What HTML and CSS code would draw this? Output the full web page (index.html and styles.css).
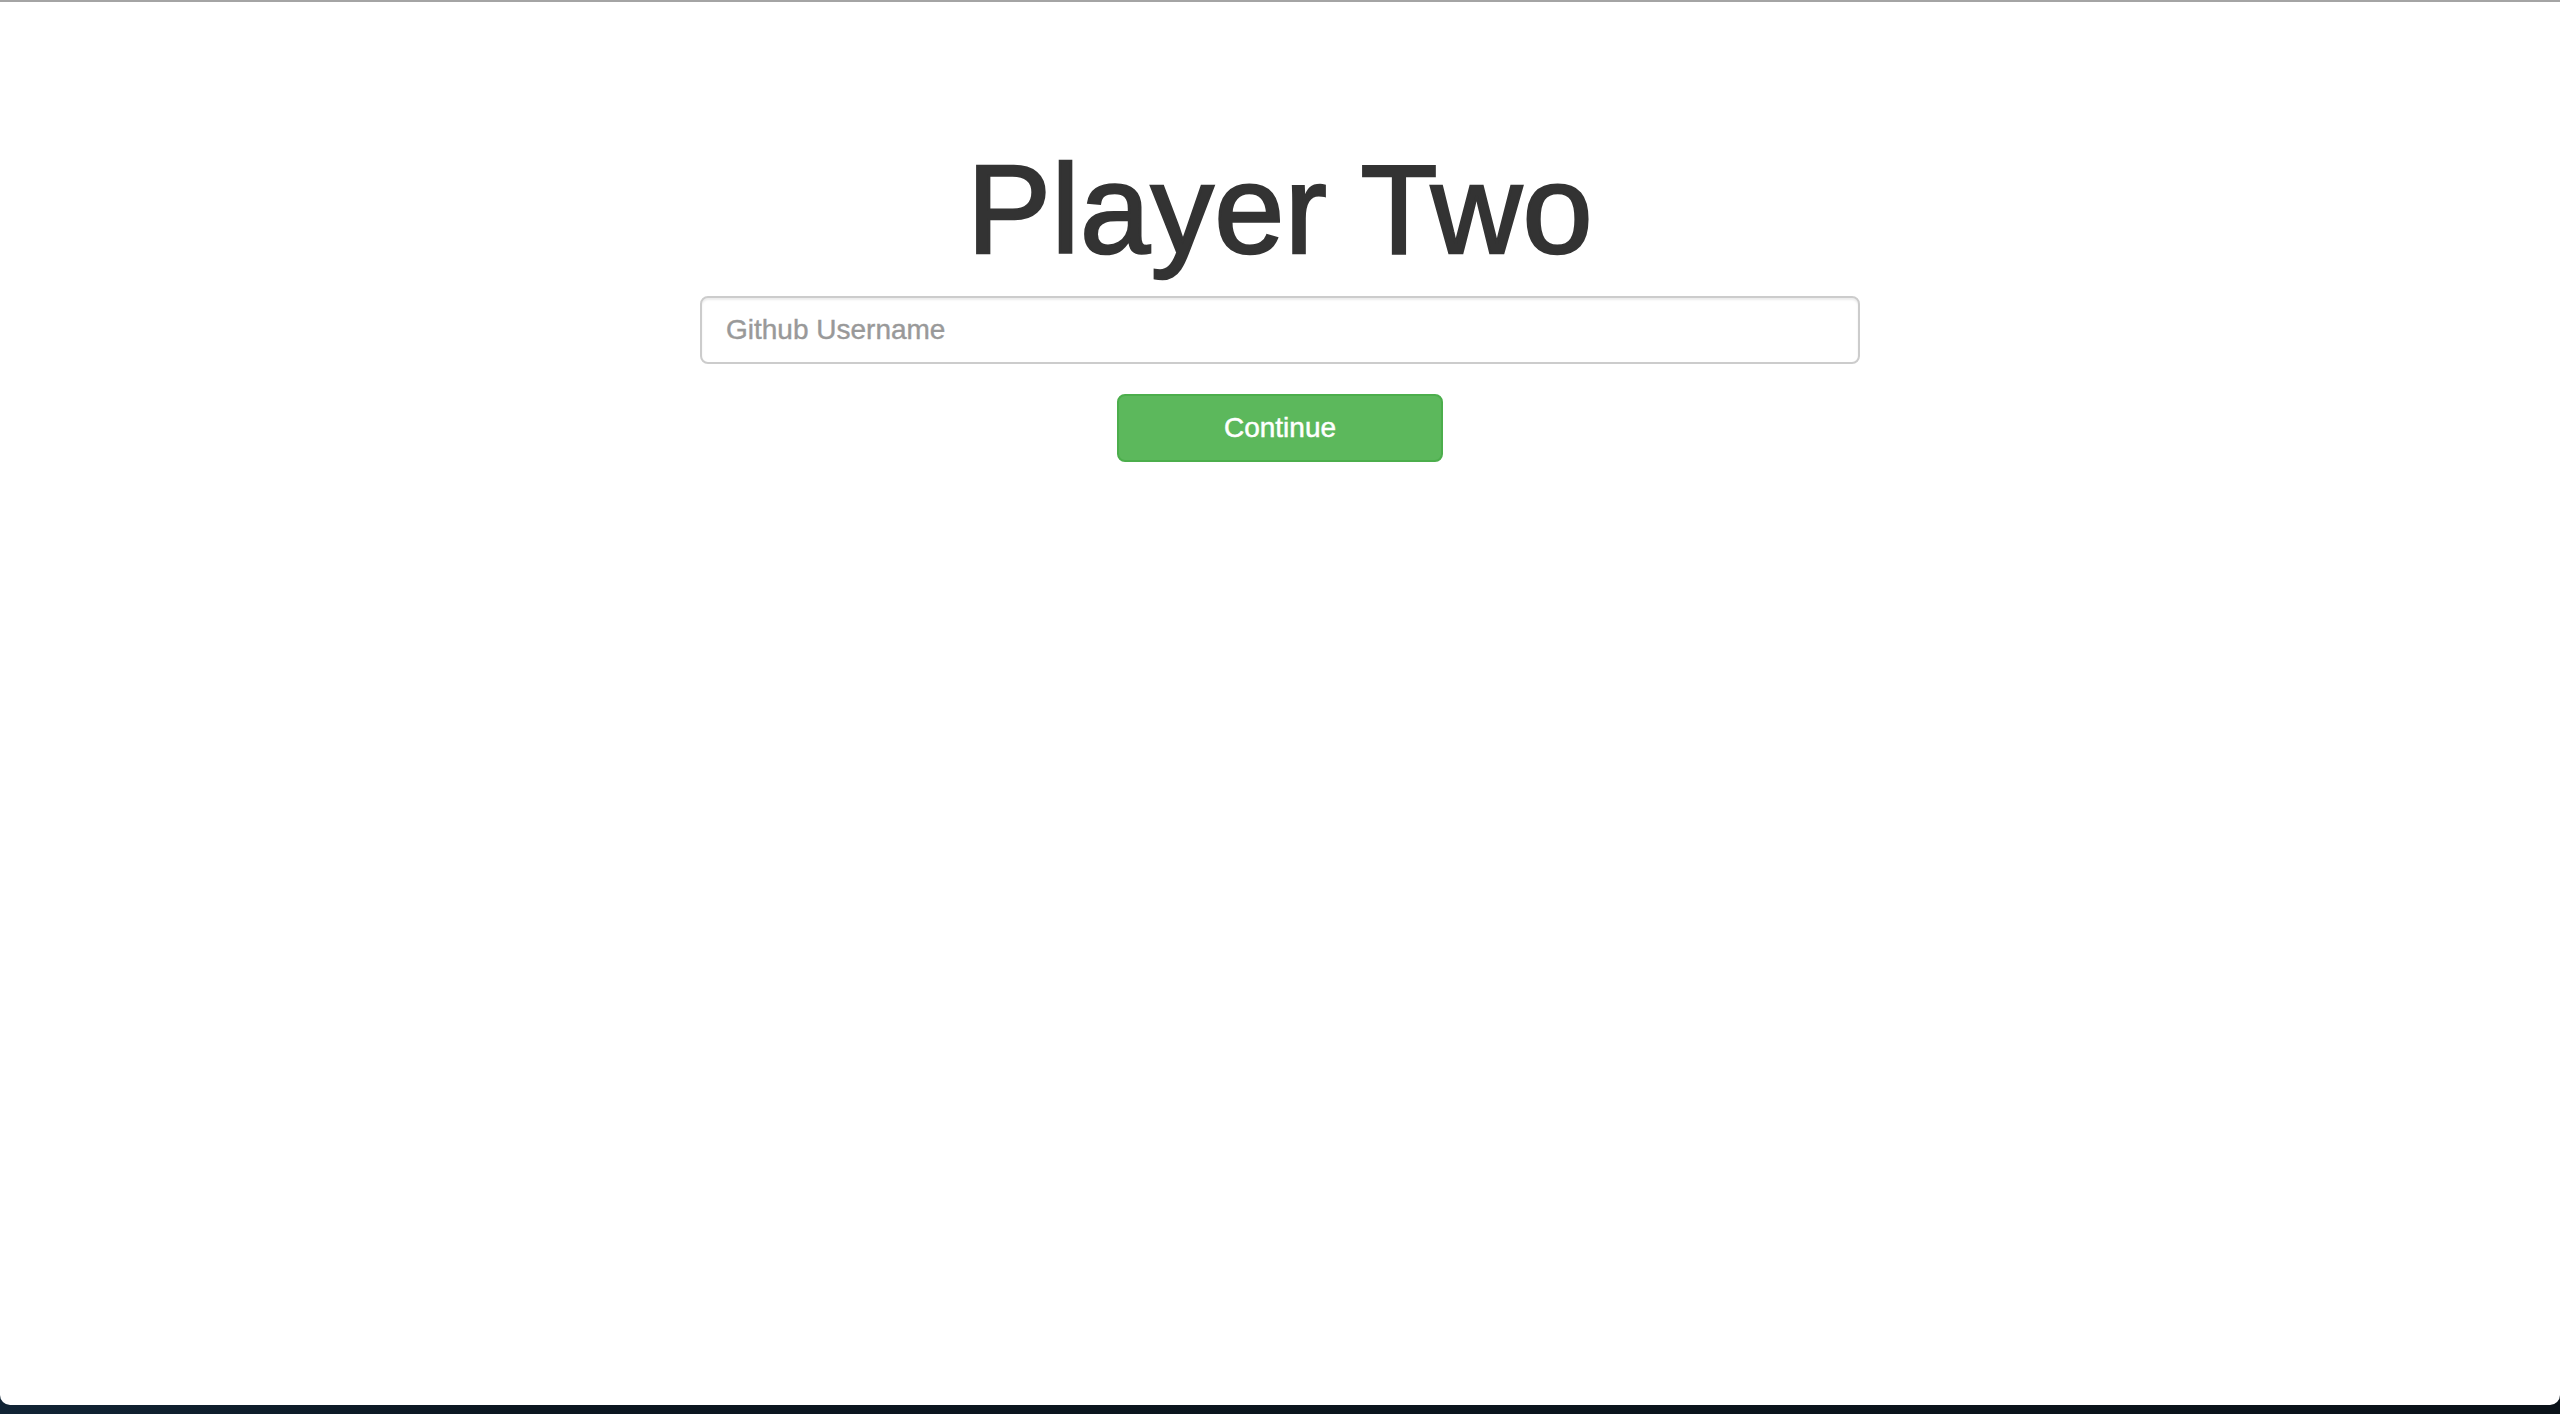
FILE: index.html
```html
<!DOCTYPE html>
<html lang="en">
<head>
<meta charset="utf-8">
<title>Player Two</title>
<link rel="stylesheet" href="styles.css">
</head>
<body>
<div class="window">
  <div class="prompt">
    <h1 class="title">Player Two</h1>
    <form class="form">
      <input class="field" type="text" placeholder="Github Username">
      <button class="btn" type="button">Continue</button>
    </form>
  </div>
</div>
</body>
</html>
```
FILE: styles.css
```css
html, body {
  margin: 0;
  padding: 0;
}
body {
  height: 1414px;
  overflow: hidden;
  background: linear-gradient(90deg, #112435 0%, #0b1620 20%, #0a1219 100%);
  font-family: "Liberation Sans", Helvetica, Arial, sans-serif;
}
.window {
  box-sizing: border-box;
  height: 1405px;
  background: #ffffff;
  border-top: 2px solid #a4a4a4;
  border-radius: 0 0 10px 10px;
}
.prompt {
  padding-top: 139px;
  display: flex;
  flex-direction: column;
  align-items: center;
}
.title {
  margin: 0;
  font-size: 126px;
  line-height: 1.1;
  font-weight: 400;
  letter-spacing: 0.5px;
  color: #333333;
  -webkit-text-stroke: 2.5px #333333;
  text-align: center;
}
.form {
  width: 1160px;
  margin-top: 16px;
  display: flex;
  flex-direction: column;
  align-items: center;
}
.field {
  box-sizing: border-box;
  width: 100%;
  height: 68px;
  margin: 0;
  padding: 0 24px;
  border: 2px solid #cccccc;
  border-radius: 8px;
  box-shadow: inset 0 2px 2px rgba(0, 0, 0, 0.075);
  font-family: inherit;
  font-size: 28px;
  color: #555555;
  background: #ffffff;
  outline: none;
}
.field::placeholder {
  color: #999999;
  opacity: 1;
  -webkit-text-stroke: 0.4px #999999;
}
.btn {
  box-sizing: border-box;
  width: 326px;
  height: 68px;
  margin-top: 30px;
  padding: 0;
  border: 2px solid #4cae4c;
  border-radius: 8px;
  background: #5cb85c;
  color: #ffffff;
  -webkit-text-stroke: 0.5px #ffffff;
  font-family: inherit;
  font-size: 28px;
  line-height: 1;
  cursor: pointer;
}
```
